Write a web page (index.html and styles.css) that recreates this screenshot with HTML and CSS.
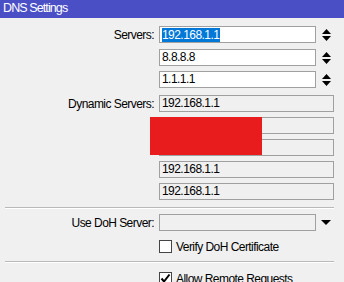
FILE: index.html
```html
<!DOCTYPE html>
<html lang="en">
<head>
  <meta charset="UTF-8" />
  <title>DNS Settings</title>
  <meta name="viewport" content="width=device-width, initial-scale=1.0" />
  <link rel="stylesheet" href="styles.css">
</head>
<body>
  <div class="titlebar">DNS Settings</div>

  <div class="form">
    <div class="row first">
      <div class="label">Servers:</div>
      <div class="field edit"><span class="selected">192.168.1.1</span></div>
      <div class="spin">
        <svg width="9" height="12" viewBox="0 0 9 12"><polygon points="4.5,0 9,5 0,5" /><polygon points="0,7 9,7 4.5,12" /></svg>
      </div>
    </div>
    <div class="row gap6">
      <div class="label"></div>
      <div class="field edit">8.8.8.8</div>
      <div class="spin">
        <svg width="9" height="12" viewBox="0 0 9 12"><polygon points="4.5,0 9,5 0,5" /><polygon points="0,7 9,7 4.5,12" /></svg>
      </div>
    </div>
    <div class="row">
      <div class="label"></div>
      <div class="field edit">1.1.1.1</div>
      <div class="spin">
        <svg width="9" height="12" viewBox="0 0 9 12"><polygon points="4.5,0 9,5 0,5" /><polygon points="0,7 9,7 4.5,12" /></svg>
      </div>
    </div>

    <div class="row gap7">
      <div class="label">Dynamic Servers:</div>
      <div class="field readonly">192.168.1.1</div>
    </div>
    <div class="row">
      <div class="label"></div>
      <div class="field readonly"></div>
    </div>
    <div class="row">
      <div class="label"></div>
      <div class="field readonly"></div>
    </div>
    <div class="row">
      <div class="label"></div>
      <div class="field readonly">192.168.1.1</div>
    </div>
    <div class="row">
      <div class="label"></div>
      <div class="field readonly">192.168.1.1</div>
    </div>

    <div class="separator sep1"></div>

    <div class="row doh">
      <div class="label">Use DoH Server:</div>
      <div class="field readonly short"></div>
      <div class="spin">
        <svg width="10" height="5" viewBox="0 0 10 5"><polygon points="0,0 10,0 5,5" /></svg>
      </div>
    </div>
    <div class="check-row verify">
      <div class="label"></div>
      <span class="checkbox"></span>
      <span class="check-text">Verify DoH Certificate</span>
    </div>

    <div class="separator sep2"></div>

    <div class="check-row remote">
      <div class="label"></div>
      <span class="checkbox">
        <svg width="11" height="11" viewBox="0 0 11 11"><path d="M1.5 5.5 L4 8.5 L9.5 1.5" /></svg>
      </span>
      <span class="check-text">Allow Remote Requests</span>
    </div>

    <div class="redact"></div>
  </div>
</body>
</html>
```

FILE: styles.css
```css
:root {
  --title-blue: #4a4fc6;
  --window-bg: #f0f0f0;
  --box-border: #a0a0a0;
  --select-blue: #0078d7;
}

* {
  box-sizing: border-box;
}

body {
  margin: 0;
  padding: 0;
  width: 344px;
  height: 282px;
  overflow: hidden;
  background-color: var(--window-bg);
  font-family: 'Liberation Sans', Arial, sans-serif;
  font-size: 12px;
  letter-spacing: -0.55px;
  color: #000;
}

.titlebar {
  height: 18px;
  line-height: 17px;
  padding-left: 3px;
  background-color: var(--title-blue);
  color: white;
  font-size: 12.5px;
  letter-spacing: -0.9px;
}

.form {
  position: relative;
  padding-top: 8px;
}

.row {
  display: flex;
  align-items: center;
  height: 17px;
  margin-top: 5px;
}

.row.first {
  margin-top: 0;
}

.row.gap6 {
  margin-top: 6px;
}

.row.gap7 {
  margin-top: 7px;
}

.label {
  width: 159px;
  flex-shrink: 0;
  padding-right: 5px;
  text-align: right;
  white-space: nowrap;
}

.field {
  height: 17px;
  line-height: 15px;
  padding-left: 2px;
  border: 1px solid var(--box-border);
  white-space: nowrap;
  overflow: hidden;
}

.field.edit {
  width: 157px;
  background: white;
}

.field.readonly {
  width: 175px;
  background: var(--window-bg);
}

.field.short {
  width: 157px;
}

.selected {
  display: inline-block;
  height: 14px;
  line-height: 14px;
  margin-top: 1px;
  padding-right: 1px;
  background-color: var(--select-blue);
  color: white;
  vertical-align: top;
}

.spin {
  width: 20px;
  display: flex;
  justify-content: center;
  align-items: center;
}

.spin svg {
  fill: #000;
}

.separator {
  margin-left: 5px;
  width: 329px;
  height: 2px;
  border-top: 1px solid #b9b9b9;
  border-bottom: 1px solid #fff;
}

.sep1 {
  margin-top: 7px;
}

.sep2 {
  margin-top: 8px;
}

.row.doh {
  margin-top: 5px;
}

.check-row {
  display: flex;
  align-items: center;
  height: 13px;
  margin-top: 9px;
}

.checkbox {
  width: 13px;
  height: 13px;
  flex-shrink: 0;
  border: 1px solid #444;
  background: white;
  display: flex;
  align-items: center;
  justify-content: center;
}

.checkbox svg path {
  fill: none;
  stroke: #000;
  stroke-width: 2;
}

.check-text {
  margin-left: 4px;
  white-space: nowrap;
}

.redact {
  position: absolute;
  left: 150px;
  top: 99px;
  width: 112px;
  height: 38px;
  background-color: #e81c1c;
}
```
